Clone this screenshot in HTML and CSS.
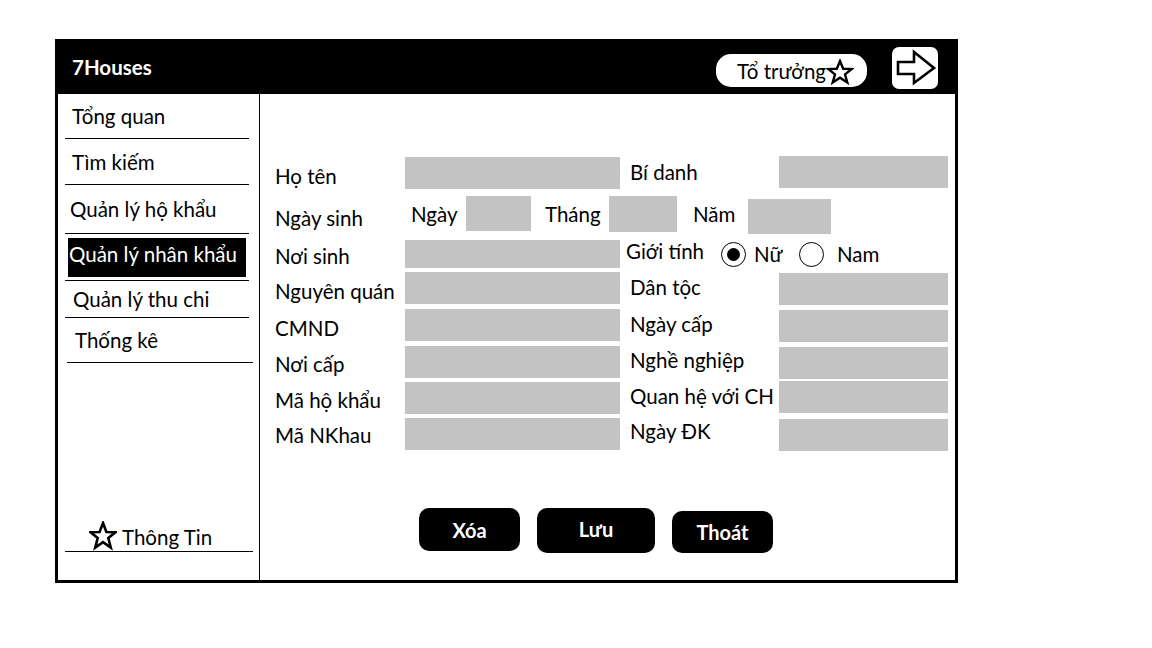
FILE: index.html
```html
<!DOCTYPE html>
<html lang="vi">
<head>
<meta charset="utf-8">
<title>7Houses - Quản lý nhân khẩu</title>
<link rel="stylesheet" href="styles.css">
</head>
<body>
<div class="frame">
  <header class="topbar">
    <div class="brand">7Houses</div>
    <div class="role">Tổ trưởng<svg class="star" viewBox="0 0 28 26" width="28" height="26"><polygon points="14,2 17.2,9.8 25.6,10.1 19,15.4 21.3,23.5 14,18.8 6.7,23.5 9,15.4 2.4,10.1 10.8,9.8" fill="none" stroke="#000" stroke-width="2.4" stroke-linejoin="miter"/></svg></div>
    <div class="logout"><svg viewBox="0 0 46 42" width="46" height="42"><polygon points="6,15 22,15 22,5 42,21 22,36 22,27 6,27" fill="none" stroke="#000" stroke-width="2.6" stroke-linejoin="miter"/></svg></div>
  </header>
  <div class="body">
    <nav class="sidebar">
      <div class="nav-item">Tổng quan</div>
      <div class="nav-item">Tìm kiếm</div>
      <div class="nav-item">Quản lý hộ khẩu</div>
      <div class="nav-item active"><span>Quản lý nhân khẩu</span></div>
      <div class="nav-item">Quản lý thu chi</div>
      <div class="nav-item">Thống kê</div>
      <div class="info"><svg viewBox="0 0 28 30" width="28" height="30"><polygon points="14,2 17.4,11 26.4,11.3 19.3,17 21.8,26.6 14,21.2 6.2,26.6 8.7,17 1.6,11.3 10.6,11" fill="none" stroke="#000" stroke-width="2.6"/></svg><span>Thông Tin</span></div>
    </nav>
    <main class="content">
      <div class="form">
        <label class="lbl">Họ tên</label>
        <div class="field"></div>
        <label class="lbl r">Bí danh</label>
        <div class="field f2 up"></div>

        <label class="lbl">Ngày sinh</label>
        <div class="birth">
          <span class="b-ngay">Ngày</span><div class="field d"></div>
          <span class="b-thang">Tháng</span><div class="field m"></div>
          <span class="b-nam">Năm</span><div class="field y"></div>
        </div>

        <label class="lbl">Nơi sinh</label>
        <div class="field short"></div>
        <div class="gender">
          <span class="g-lbl">Giới tính</span>
          <span class="radio on"></span><span class="g-nu">Nữ</span>
          <span class="radio"></span><span class="g-nam">Nam</span>
        </div>

        <label class="lbl">Nguyên quán</label>
        <div class="field"></div>
        <label class="lbl r">Dân tộc</label>
        <div class="field f2"></div>

        <label class="lbl">CMND</label>
        <div class="field"></div>
        <label class="lbl r">Ngày cấp</label>
        <div class="field f2"></div>

        <label class="lbl">Nơi cấp</label>
        <div class="field"></div>
        <label class="lbl r">Nghề nghiệp</label>
        <div class="field f2"></div>

        <label class="lbl">Mã hộ khẩu</label>
        <div class="field"></div>
        <label class="lbl r">Quan hệ với CH</label>
        <div class="field f2 up"></div>

        <label class="lbl">Mã NKhau</label>
        <div class="field"></div>
        <label class="lbl r">Ngày ĐK</label>
        <div class="field f2"></div>
      </div>
      <div class="actions">
        <button class="btn b1">Xóa</button>
        <button class="btn b2">Lưu</button>
        <button class="btn b3">Thoát</button>
      </div>
    </main>
  </div>
</div>
</body>
</html>
```

FILE: styles.css
```css
* { box-sizing: border-box; }
html, body { margin: 0; padding: 0; background: #fff; }
body {
  font-family: Lato, "Open Sans", "Liberation Sans", sans-serif;
  font-size: 20.5px;
  color: #000;
}

.frame {
  margin: 39px 0 0 55px;
  width: 903px;
  height: 544px;
  border: 3px solid #000;
  border-top: 0;
  display: flex;
  flex-direction: column;
}

.topbar {
  height: 55px;
  background: #000;
  display: flex;
  align-items: flex-start;
  margin: 0 -3px 0 -3px;
  padding-left: 17px;
}
.brand {
  color: #fff;
  font-weight: 700;
  font-size: 20.5px;
  margin-top: 16px;
  width: 644px;
}
.role {
  margin-top: 15px;
  width: 151px;
  height: 33px;
  background: #fff;
  border-radius: 15px;
  display: flex;
  align-items: center;
  padding-left: 21px;
  white-space: nowrap;
}
.role .star { margin-left: 0; margin-top: 2px; flex: none; }
.logout {
  margin-top: 8px;
  margin-left: 25px;
  width: 46px;
  height: 42px;
  background: #fff;
  border-radius: 7px;
  display: flex;
}

.body {
  flex: 1;
  display: flex;
}

.sidebar {
  width: 202px;
  border-right: 1px solid #000;
  display: flex;
  flex-direction: column;
  padding-bottom: 28px;
}
.nav-item {
  margin: 0 10px 0 7px;
  height: 45px;
  border-bottom: 1px solid #000;
  display: flex;
  align-items: center;
  padding-left: 7px;
  white-space: nowrap;
}
.nav-item:nth-child(2) { height: 46px; }
.nav-item:nth-child(3) { height: 49px; padding-left: 5px; }
.nav-item:nth-child(4) { height: 47px; }
.nav-item:nth-child(5) { height: 37px; padding-left: 8px; }
.nav-item:nth-child(6) { height: 45px; padding-left: 8px; margin-right: 6px; margin-left: 9px; }
.nav-item.active { padding-left: 3px; padding-right: 3px; align-items: flex-start; padding-top: 4px; }
.nav-item.active span {
  display: block;
  width: 100%;
  height: 39px;
  background: #000;
  color: #fff;
  padding: 4px 0 0 1px;
  overflow: hidden;
}

.info {
  margin: auto 6px 0 7px;
  height: 31px;
  border-bottom: 1px solid #000;
  display: flex;
  align-items: flex-start;
  padding-left: 24px;
  overflow: hidden;
}
.info svg { flex: none; }
.info span { margin-left: 5px; margin-top: 3px; line-height: 26px; }

.content {
  flex: 1;
  padding: 63px 0 0 12px;
}

.form {
  display: grid;
  grid-template-columns: 133px 215px 9px 150px 169px;
  grid-template-rows: 38px 45px 32px 37px 37px 36px 36px 33px;
}
.lbl {
  grid-column: 1;
  display: flex;
  align-items: center;
  padding-left: 3px;
  white-space: nowrap;
}
.lbl.r {
  grid-column: 4;
  padding-bottom: 8px;
  padding-left: 1px;
}
.field {
  background: #c3c3c3;
  height: 32px;
  grid-column: 2;
  align-self: start;
}
.field.f2 { grid-column: 5; margin-top: 1px; }
.field.up { margin-top: -1px; }
.field.short { height: 28px; }

.birth {
  grid-column: 2 / 6;
  display: flex;
  align-items: center;
  padding-left: 6px;
  padding-bottom: 8px;
}
.birth .field { align-self: center; }
.b-ngay { width: 55px; }
.field.d { width: 65px; height: 35px; }
.b-thang { width: 64px; margin-left: 14px; }
.field.m { width: 68px; height: 36px; }
.b-nam { width: 55px; margin-left: 16px; }
.field.y { width: 83px; height: 35px; margin-top: 5px; }

.gender {
  grid-column: 4 / 6;
  display: flex;
  align-items: center;
  margin-left: -3px;
  padding-bottom: 4px;
}
.g-lbl { width: 95px; margin-top: -6px; white-space: nowrap; }
.radio {
  width: 25px;
  height: 25px;
  border: 1.3px solid #000;
  border-radius: 50%;
  position: relative;
  flex: none;
}
.radio.on::after {
  content: "";
  position: absolute;
  left: 5px; top: 5px;
  width: 13px; height: 13px;
  border-radius: 50%;
  background: #000;
}
.g-nu { margin-left: 8px; width: 45px; }
.g-nam { margin-left: 13px; }

.actions {
  display: flex;
  align-items: flex-start;
  gap: 17px;
  margin-top: 57px;
  padding-left: 147px;
}
.btn {
  font-family: Lato, "Open Sans", "Liberation Sans", sans-serif;
  font-weight: 700;
  font-size: 20px;
  color: #fff;
  background: #000;
  border: 0;
  border-radius: 10px;
  padding: 0;
}
.b1 { width: 101px; height: 43px; }
.b2 { width: 118px; height: 45px; padding-bottom: 4px; }
.b3 { width: 101px; height: 42px; margin-top: 3px; }
```
